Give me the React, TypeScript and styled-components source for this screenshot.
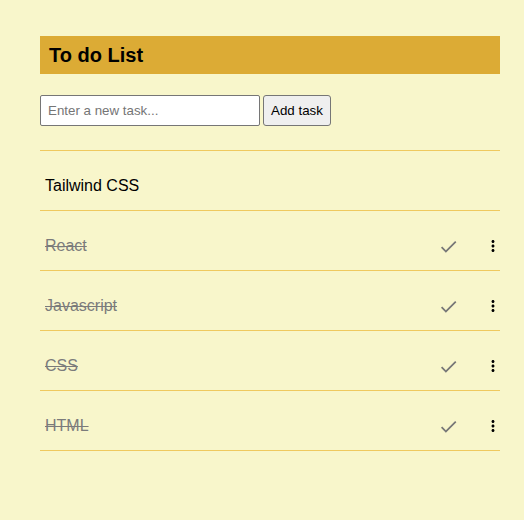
import React from "react";
import styled, { createGlobalStyle } from "styled-components";
import { MdCheck, MdMoreVert } from "react-icons/md";

const Global = createGlobalStyle`
  html, body { margin: 0; padding: 0; background: #f8f6cb; }
  body { font-family: "Liberation Sans", Arial, sans-serif; }
`;

const Page = styled.div`
  padding: 36px 24px 40px 40px;
  width: 460px;
`;

const Header = styled.div`
  background: #dcab35;
  height: 38px;
  display: flex;
  align-items: center;
  padding-left: 9px;
`;

const Title = styled.h1`
  margin: 0;
  font-size: 20px;
  font-weight: bold;
  color: #000;
`;

const Form = styled.form`
  display: flex;
  gap: 3px;
  margin-top: 21px;
`;

const Input = styled.input`
  box-sizing: border-box;
  width: 220px;
  height: 31px;
  border: 1px solid #767676;
  border-radius: 2px;
  padding: 1px 7px;
  font-family: "Liberation Sans", Arial, sans-serif;
  font-size: 13.33px;
  background: #fff;
  &::placeholder { color: #757575; }
`;

const Button = styled.button`
  box-sizing: border-box;
  width: 68px;
  height: 31px;
  border: 1px solid #767676;
  border-radius: 3px;
  background: #efefef;
  font-family: "Liberation Sans", Arial, sans-serif;
  font-size: 13.33px;
  color: #000;
  padding: 0;
`;

const List = styled.ul`
  list-style: none;
  margin: 24px 0 0;
  padding: 0;
  border-top: 1px solid #efc95f;
`;

const Row = styled.li`
  box-sizing: border-box;
  height: 60px;
  border-bottom: 1px solid #efc95f;
  display: flex;
  align-items: center;
  padding: 11px 0 0 5px;
`;

const Label = styled.span<{ $done: boolean }>`
  flex: 1;
  font-size: 16px;
  color: ${(p) => (p.$done ? "#7b7b7b" : "#000")};
  text-decoration: ${(p) => (p.$done ? "line-through" : "none")};
`;

const Actions = styled.div`
  display: flex;
  align-items: center;
  gap: 25px;
  margin-right: -2px;
`;

const CheckIcon = styled(MdCheck)`
  color: #777;
  display: block;
`;

const MoreIcon = styled(MdMoreVert)`
  color: #000;
  display: block;
`;

const tasks = [
  { name: "Tailwind CSS", done: false },
  { name: "React", done: true },
  { name: "Javascript", done: true },
  { name: "CSS", done: true },
  { name: "HTML", done: true },
];

export default function App() {
  return (
    <Page>
      <Global />
      <Header>
        <Title>To do List</Title>
      </Header>
      <Form onSubmit={(e) => e.preventDefault()}>
        <Input placeholder="Enter a new task..." />
        <Button type="submit">Add task</Button>
      </Form>
      <List>
        {tasks.map((t) => (
          <Row key={t.name}>
            <Label $done={t.done}>{t.name}</Label>
            {t.done && (
              <Actions>
                <CheckIcon size={21} />
                <MoreIcon size={18} />
              </Actions>
            )}
          </Row>
        ))}
      </List>
    </Page>
  );
}
